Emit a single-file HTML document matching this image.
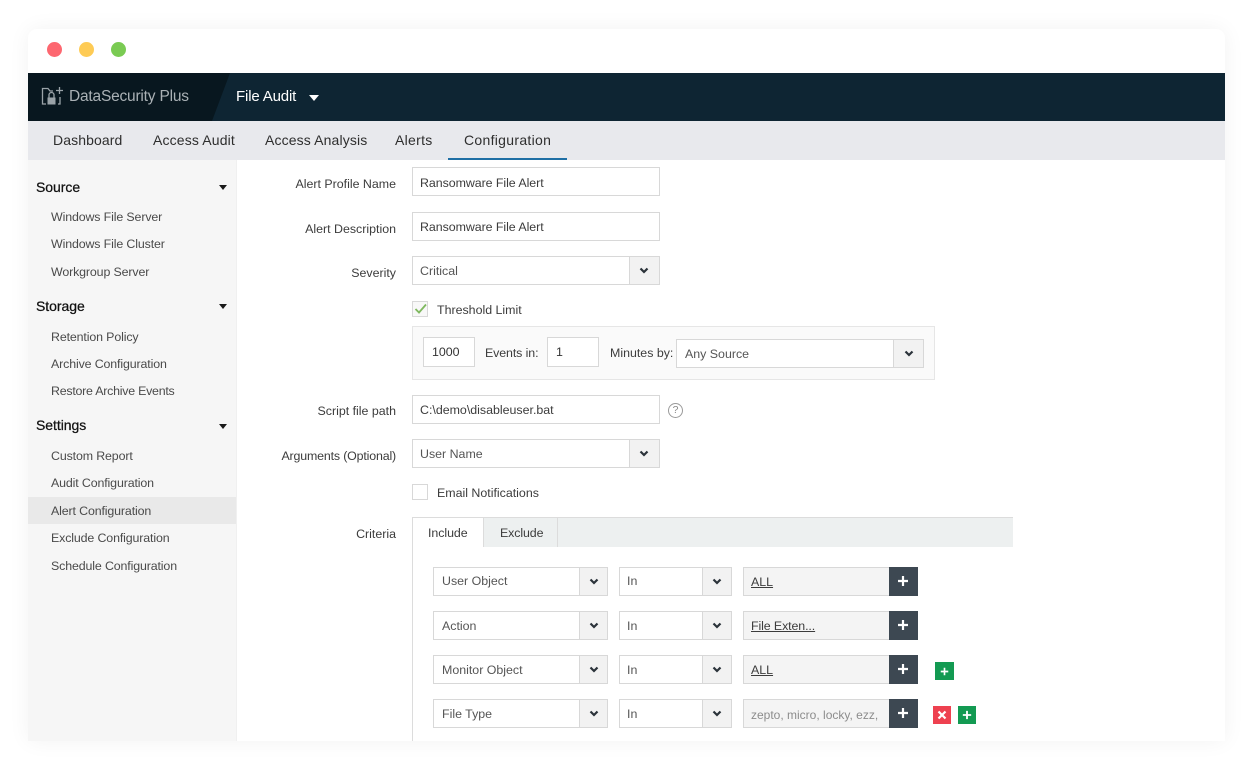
<!DOCTYPE html>
<html><head><meta charset="utf-8">
<style>
*{box-sizing:border-box}
html,body{margin:0;padding:0;width:1254px;height:766px;overflow:hidden;background:#fff}
body{position:relative;font-family:"Liberation Sans",sans-serif;font-size:12.4px;color:#3c3c3c}
.a{position:absolute;white-space:nowrap}
.t{position:absolute;white-space:nowrap;line-height:16px;height:16px}
.r{text-align:right}
.box{position:absolute;border:1px solid #d8d8d8;background:#fff}
.arr{position:absolute;background:#f2f2f2;border:1px solid #d8d8d8}
.arr svg{position:absolute;left:50%;top:50%;margin:-4px 0 0 -5px}
.side{position:absolute;left:51px;line-height:16px;color:#4a4a4a;white-space:nowrap;letter-spacing:-.13px}
.head{position:absolute;left:36px;font-size:14px;line-height:18px;color:#111;white-space:nowrap;-webkit-text-stroke:.25px #111;letter-spacing:-.05px}
.tri{position:absolute;left:219px;width:0;height:0;border-left:4.5px solid transparent;border-right:4.5px solid transparent;border-top:5px solid #1a1a1a}
.nav{position:absolute;top:130.5px;font-size:14px;line-height:18px;color:#2e2e2e;white-space:nowrap;letter-spacing:.13px}
.dark{position:absolute;width:28.5px;height:29px;background:#3d4852}
.u{text-decoration:underline}
</style></head>
<body>
<svg width="0" height="0" style="position:absolute"><defs>
<symbol id="ch" viewBox="0 0 10 8"><path d="M1.500 1.500 L5 5 L8.500 1.500" fill="none" stroke="#2b333a" stroke-width="2.200"/></symbol>
<symbol id="pl" viewBox="0 0 12 12"><path d="M6 1V11M1 6H11" fill="none" stroke="#fff" stroke-width="2.200"/></symbol>
</defs></svg>

<div class="a" style="left:28px;top:29px;width:1197px;height:712px;background:#fff;border-radius:9px 9px 0 0;box-shadow:0 0 22px rgba(0,0,0,.055)"></div>

<div class="a" style="left:47px;top:42px;width:15px;height:15px;border-radius:50%;background:#fd6770"></div>
<div class="a" style="left:79px;top:42px;width:15px;height:15px;border-radius:50%;background:#fecb55"></div>
<div class="a" style="left:111px;top:42px;width:15px;height:15px;border-radius:50%;background:#7acb53"></div>

<div class="a" style="left:28px;top:73px;width:1197px;height:48px;background:#0e2533"></div>
<svg class="a" style="left:28px;top:73px" width="205" height="48"><polygon points="0,0 202,0 184,48 0,48" fill="#08171f"/></svg>
<svg class="a" style="left:40px;top:86px" width="24" height="22" viewBox="0 0 24 22" fill="none" stroke="#9aa3a8" stroke-width="1.300">
<path d="M6 18H2.500V2.500H8L10 5H13"/><rect x="7.500" y="11.500" width="8" height="7" fill="#9aa3a8" stroke="none"/><path d="M9 11.500V9a2.500 2.500 0 0 1 5 0v2.500"/><path d="M19.500 1V8M16 4.500H23"/><path d="M20 11v7h-2"/>
</svg>
<div class="a" style="left:69px;top:87px;font-size:15.500px;line-height:19px;color:#aab1b5;letter-spacing:-.2px">DataSecurity Plus</div>
<div class="a" style="left:236px;top:87px;font-size:15px;line-height:19px;color:#fff;letter-spacing:-.15px">File Audit</div>
<div class="a" style="left:309px;top:95px;width:0;height:0;border-left:5px solid transparent;border-right:5px solid transparent;border-top:6px solid #fff"></div>

<div class="a" style="left:28px;top:121px;width:1197px;height:39px;background:#e8e9ed"></div>
<div class="nav" style="left:53px;letter-spacing:.1px">Dashboard</div>
<div class="nav" style="left:153px;letter-spacing:.15px">Access Audit</div>
<div class="nav" style="left:265px;letter-spacing:.13px">Access Analysis</div>
<div class="nav" style="left:395px;letter-spacing:.3px">Alerts</div>
<div class="nav" style="left:464px;letter-spacing:.3px">Configuration</div>
<div class="a" style="left:448px;top:158px;width:119px;height:2px;background:#1f6fa5"></div>

<div class="a" style="left:28px;top:160px;width:208px;height:581px;background:#f6f6f6"></div>
<div class="a" style="left:236px;top:160px;width:1px;height:581px;background:#f0f0f0"></div>
<div class="a" style="left:28px;top:497px;width:208px;height:27px;background:#e9e9e9"></div>

<div class="head" style="top:178px">Source</div><div class="tri" style="top:185px"></div>
<div class="side" style="top:209px">Windows File Server</div>
<div class="side" style="top:236px">Windows File Cluster</div>
<div class="side" style="top:264px">Workgroup Server</div>
<div class="head" style="top:297px">Storage</div><div class="tri" style="top:304px"></div>
<div class="side" style="top:329px">Retention Policy</div>
<div class="side" style="top:356px">Archive Configuration</div>
<div class="side" style="top:383px;letter-spacing:-.24px">Restore Archive Events</div>
<div class="head" style="top:416px">Settings</div><div class="tri" style="top:424px"></div>
<div class="side" style="top:448px">Custom Report</div>
<div class="side" style="top:475px">Audit Configuration</div>
<div class="side" style="top:502.500px">Alert Configuration</div>
<div class="side" style="top:530px">Exclude Configuration</div>
<div class="side" style="top:558px">Schedule Configuration</div>

<div class="t r" style="right:858px;top:176px">Alert Profile Name</div>
<div class="t r" style="right:858px;top:221px">Alert Description</div>
<div class="t r" style="right:858px;top:265px">Severity</div>
<div class="t r" style="right:858px;top:403px">Script file path</div>
<div class="t r" style="right:858px;top:447.500px;letter-spacing:-.16px">Arguments (Optional)</div>
<div class="t r" style="right:858px;top:526px">Criteria</div>

<div class="box" style="left:412px;top:167px;width:247.500px;height:29px"></div>
<div class="t" style="left:420px;top:175px;letter-spacing:-.05px">Ransomware File Alert</div>
<div class="box" style="left:412px;top:212px;width:247.500px;height:29px"></div>
<div class="t" style="left:420px;top:219px;letter-spacing:-.05px">Ransomware File Alert</div>

<div class="box" style="left:412px;top:256px;width:247.500px;height:29px"></div>
<div class="arr" style="left:629px;top:256px;width:30.500px;height:29px"><svg width="10" height="8"><use href="#ch"/></svg></div>
<div class="t" style="left:420px;top:263px;color:#555">Critical</div>

<div class="a" style="left:412px;top:301px;width:16px;height:16px;border:1px solid #d8d8d8;background:#f8f8f8"></div>
<svg class="a" style="left:413px;top:302px" width="15" height="14"><path d="M2.500 7 L6 10.500 L13 2.500" fill="none" stroke="#7fb85f" stroke-width="1.800"/></svg>
<div class="t" style="left:437px;top:302px">Threshold Limit</div>

<div class="a" style="left:412px;top:326px;width:523px;height:54px;background:#fafafa;border:1px solid #e6e6e6"></div>
<div class="box" style="left:423px;top:337px;width:52px;height:30px"></div>
<div class="t" style="left:432px;top:344px;color:#333">1000</div>
<div class="t" style="left:485px;top:345px;letter-spacing:-.1px">Events in:</div>
<div class="box" style="left:547px;top:337px;width:52px;height:30px"></div>
<div class="t" style="left:556px;top:344px;color:#333">1</div>
<div class="t" style="left:610px;top:345px">Minutes by:</div>
<div class="box" style="left:676px;top:339px;width:248px;height:29px"></div>
<div class="arr" style="left:893px;top:339px;width:31px;height:29px"><svg width="10" height="8"><use href="#ch"/></svg></div>
<div class="t" style="left:685px;top:346px;color:#555">Any Source</div>

<div class="box" style="left:412px;top:395px;width:247.500px;height:29px"></div>
<div class="t" style="left:420px;top:402px">C:\demo\disableuser.bat</div>
<div class="a" style="left:668px;top:403px;width:15px;height:15px;border:1.300px solid #9a9a9a;border-radius:50%;font-size:10.500px;line-height:13px;text-align:center;color:#8a8a8a">?</div>

<div class="box" style="left:412px;top:439px;width:247.500px;height:29px"></div>
<div class="arr" style="left:629px;top:439px;width:30.500px;height:29px"><svg width="10" height="8"><use href="#ch"/></svg></div>
<div class="t" style="left:420px;top:446px;color:#555">User Name</div>

<div class="a" style="left:412px;top:484px;width:16px;height:16px;border:1px solid #d8d8d8;background:#fff"></div>
<div class="t" style="left:437px;top:485px">Email Notifications</div>

<div class="a" style="left:412px;top:517px;width:601px;height:30px;background:#edf0f0;border-top:1px solid #dcdcdc"></div>
<div class="a" style="left:412px;top:517px;width:1px;height:224px;background:#dcdcdc"></div>
<div class="a" style="left:413px;top:518px;width:70px;height:29px;background:#fff"></div>
<div class="a" style="left:483px;top:518px;width:1px;height:29px;background:#dcdcdc"></div>
<div class="a" style="left:557px;top:518px;width:1px;height:29px;background:#dcdcdc"></div>
<div class="t" style="left:428px;top:525px;letter-spacing:-.05px">Include</div>
<div class="t" style="left:500px;top:525px;letter-spacing:-.1px">Exclude</div>

<div class="box" style="left:433px;top:567px;width:175px;height:29px"></div>
<div class="arr" style="left:579px;top:567px;width:29px;height:29px"><svg width="10" height="8"><use href="#ch"/></svg></div>
<div class="t" style="left:442px;top:573px;color:#555">User Object</div>
<div class="box" style="left:619px;top:567px;width:113px;height:29px"></div>
<div class="arr" style="left:702px;top:567px;width:30px;height:29px"><svg width="10" height="8"><use href="#ch"/></svg></div>
<div class="t" style="left:627px;top:573px;color:#555">In</div>
<div class="box" style="left:743px;top:567px;width:147px;height:29px;background:#f4f4f4"></div>
<div class="t u" style="left:751px;top:574px">ALL</div>
<div class="dark" style="left:889px;top:567px"><svg style="position:absolute;left:8px;top:8px" width="12" height="12"><use href="#pl"/></svg></div>

<div class="box" style="left:433px;top:611px;width:175px;height:29px"></div>
<div class="arr" style="left:579px;top:611px;width:29px;height:29px"><svg width="10" height="8"><use href="#ch"/></svg></div>
<div class="t" style="left:442px;top:618px;color:#555">Action</div>
<div class="box" style="left:619px;top:611px;width:113px;height:29px"></div>
<div class="arr" style="left:702px;top:611px;width:30px;height:29px"><svg width="10" height="8"><use href="#ch"/></svg></div>
<div class="t" style="left:627px;top:618px;color:#555">In</div>
<div class="box" style="left:743px;top:611px;width:147px;height:29px;background:#f4f4f4"></div>
<div class="t u" style="left:751px;top:618px;letter-spacing:-.1px">File Exten...</div>
<div class="dark" style="left:889px;top:611px"><svg style="position:absolute;left:8px;top:8px" width="12" height="12"><use href="#pl"/></svg></div>

<div class="box" style="left:433px;top:655px;width:175px;height:29px"></div>
<div class="arr" style="left:579px;top:655px;width:29px;height:29px"><svg width="10" height="8"><use href="#ch"/></svg></div>
<div class="t" style="left:442px;top:662px;color:#555">Monitor Object</div>
<div class="box" style="left:619px;top:655px;width:113px;height:29px"></div>
<div class="arr" style="left:702px;top:655px;width:30px;height:29px"><svg width="10" height="8"><use href="#ch"/></svg></div>
<div class="t" style="left:627px;top:662px;color:#555">In</div>
<div class="box" style="left:743px;top:655px;width:147px;height:29px;background:#f4f4f4"></div>
<div class="t u" style="left:751px;top:662px">ALL</div>
<div class="dark" style="left:889px;top:655px"><svg style="position:absolute;left:8px;top:8px" width="12" height="12"><use href="#pl"/></svg></div>
<div class="a" style="left:935px;top:662px;width:19px;height:18px;background:#139a52"><svg style="position:absolute;left:5px;top:5px" width="9" height="9" viewBox="0 0 12 12"><use href="#pl"/></svg></div>

<div class="box" style="left:433px;top:699px;width:175px;height:29px"></div>
<div class="arr" style="left:579px;top:699px;width:29px;height:29px"><svg width="10" height="8"><use href="#ch"/></svg></div>
<div class="t" style="left:442px;top:706px;color:#555">File Type</div>
<div class="box" style="left:619px;top:699px;width:113px;height:29px"></div>
<div class="arr" style="left:702px;top:699px;width:30px;height:29px"><svg width="10" height="8"><use href="#ch"/></svg></div>
<div class="t" style="left:627px;top:706px;color:#555">In</div>
<div class="box" style="left:743px;top:699px;width:147px;height:29px;background:#f4f4f4"></div>
<div class="t" style="left:751px;top:707px;color:#8c8c8c;font-size:12px">zepto, micro, locky, ezz,</div>
<div class="dark" style="left:889px;top:699px"><svg style="position:absolute;left:8px;top:8px" width="12" height="12"><use href="#pl"/></svg></div>
<div class="a" style="left:933px;top:706px;width:18px;height:18px;background:#ee4150"><svg style="position:absolute;left:4px;top:4px" width="10" height="10" viewBox="0 0 10 10"><path d="M1.500 1.500L8.500 8.500M8.500 1.500L1.500 8.500" stroke="#fff" stroke-width="2.200"/></svg></div>
<div class="a" style="left:958px;top:706px;width:18px;height:18px;background:#139a52"><svg style="position:absolute;left:4px;top:4px" width="10" height="10" viewBox="0 0 12 12"><use href="#pl"/></svg></div>
</body></html>
